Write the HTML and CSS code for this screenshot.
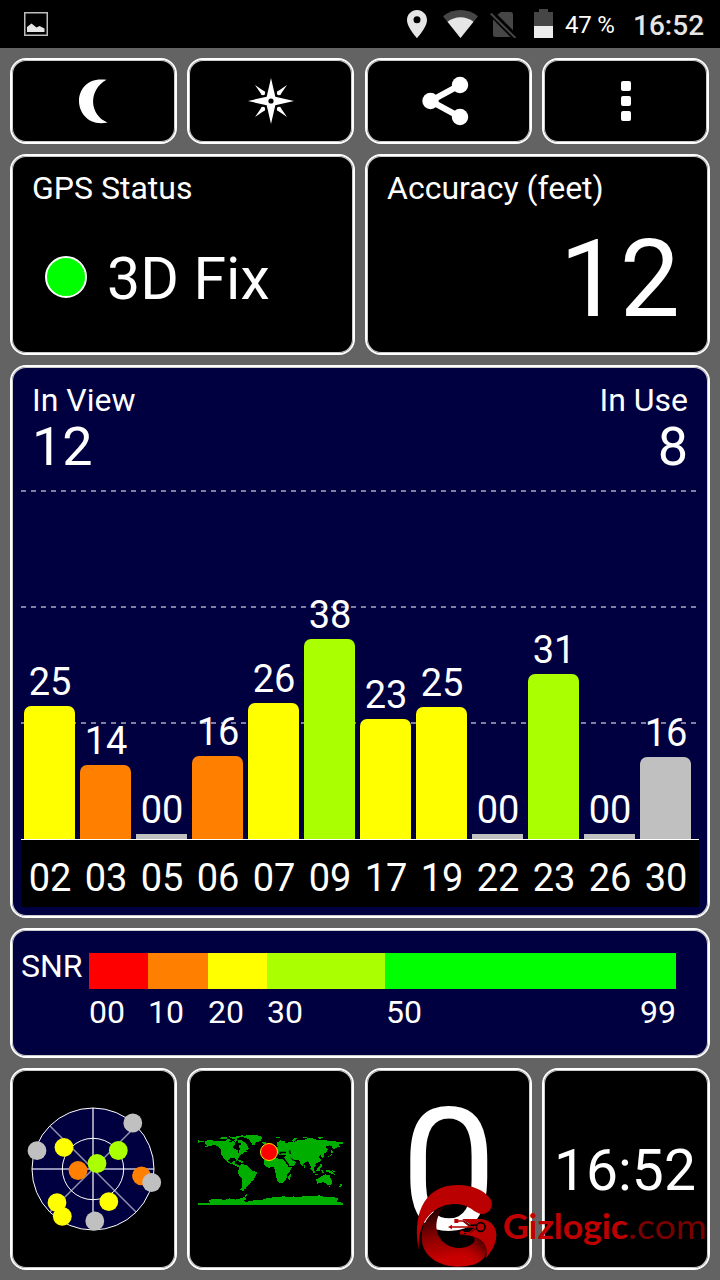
FILE: index.html
```html
<!DOCTYPE html>
<html lang="en">
<head>
    <meta charset="UTF-8">
    <meta name="viewport" content="width=device-width, initial-scale=1.0">
    <title>GPS Test</title>
    <link rel="stylesheet" href="styles.css">
</head>
<body>
    <!-- Status bar -->
    <header class="status-bar">
        <svg class="icon-picture" width="24" height="24" viewBox="0 0 24 24">
            <rect x="0.75" y="0.75" width="22.5" height="22.5" fill="none" stroke="#bdbdbd" stroke-width="1.5"/>
            <path d="M3 20V15L7.500 11.500L12.500 15.500L15.500 14L20.500 16.500V20Z" fill="#e6e6e6"/>
        </svg>
        <div class="status-icons">
            <svg width="20" height="28" viewBox="0 0 20 28">
                <path fill-rule="evenodd" d="M10 0C4.500 0 0 4.400 0 9.900C0 17.300 10 28 10 28S20 17.300 20 9.900C20 4.400 15.500 0 10 0ZM10 13.300A3.500 3.500 0 1 1 10 6.300A3.500 3.500 0 0 1 10 13.300Z" fill="#e6e6e6"/>
            </svg>
            <svg class="icon-wifi" width="35" height="28" viewBox="0 0 35 28">
                <path d="M17.500 28L0 6.200C10-2 25-2 35 6.200Z" fill="#464646"/>
                <path d="M17.500 28L4.500 11.800C12 5.700 23 5.700 30.500 11.800Z" fill="#e6e6e6"/>
            </svg>
            <svg class="icon-sim" width="27" height="28" viewBox="0 0 27 28">
                <path d="M11 2H20.500Q23 2 23 4.500V20.300L7.500 4.800ZM3 9.300L20.500 27H5.500Q3 27 3 24.500Z" fill="#464646"/>
                <path d="M0.800 3.500L25.500 28" stroke="#464646" stroke-width="2"/>
            </svg>
            <svg class="icon-battery" width="19" height="29" viewBox="0 0 19 29">
                <path d="M0 3H5V0H14V3H19V17H0Z" fill="#464646"/>
                <path d="M0 17H19V29H0Z" fill="#ececec"/>
            </svg>
            <span class="battery-level">47 %</span>
            <span class="status-time">16:52</span>
        </div>
    </header>

    <main class="screen">
        <!-- Buttons -->
        <div class="button-row">
            <button class="panel tool">
                <svg width="60" height="60" viewBox="0 0 60 60">
                    <path d="M42.500 8.800C24 6 15 18 15 30S25 55.500 43.500 51.500C25 44 24 19 42.500 8.800Z" fill="#fff"/>
                </svg>
            </button>
            <button class="panel tool">
                <svg width="60" height="60" viewBox="0 0 60 60">
                    <g fill="#fff">
                        <path d="M30 7L34.300 25.700L53 30L34.300 34.300L30 53L25.700 34.300L7 30L25.700 25.700Z"/>
                        <path d="M14 14L23.500 20.500L20.500 23.500ZM46 14L36.500 20.500L39.500 23.500ZM14 46L23.500 39.500L20.500 36.500ZM46 46L36.500 39.500L39.500 36.500Z"/>
                        <circle cx="22" cy="22" r="2.200"/>
                        <circle cx="38" cy="22" r="2.200"/>
                        <circle cx="22" cy="38" r="2.200"/>
                        <circle cx="38" cy="38" r="2.200"/>
                    </g>
                    <circle cx="30" cy="30" r="2.600" fill="#000"/>
                </svg>
            </button>
            <button class="panel tool">
                <svg width="60" height="60" viewBox="0 0 60 60">
                    <path d="M42 14L12.500 30L42 46" fill="none" stroke="#fff" stroke-width="6"/>
                    <circle cx="42" cy="14" r="8.200" fill="#fff"/>
                    <circle cx="12.500" cy="30" r="8.200" fill="#fff"/>
                    <circle cx="42" cy="46" r="8.200" fill="#fff"/>
                </svg>
            </button>
            <button class="panel tool">
                <svg width="60" height="60" viewBox="0 0 60 60" fill="#fff">
                    <rect x="25" y="10" width="10" height="10" rx="2"/>
                    <rect x="25" y="25" width="10" height="10" rx="2"/>
                    <rect x="25" y="40" width="10" height="10" rx="2"/>
                </svg>
            </button>
        </div>

        <!-- Fix and accuracy -->
        <div class="info-row">
            <section class="panel info">
                <h2 class="label">GPS Status</h2>
                <div class="fix">
                    <span class="fix-light"></span>
                    <span>3D Fix</span>
                </div>
            </section>
            <section class="panel info">
                <h2 class="label">Accuracy (feet)</h2>
                <div class="accuracy">12</div>
            </section>
        </div>

        <!-- Satellites -->
        <section class="panel satellites">
            <div class="counts">
                <div>
                    <h2 class="label">In View</h2>
                    <div class="count">12</div>
                </div>
                <div class="in-use">
                    <h2 class="label">In Use</h2>
                    <div class="count">8</div>
                </div>
            </div>
            <div class="plot">
                <div class="sat"><span>25</span><div class="bar yellow" style="height: 133px"></div></div>
                <div class="sat"><span>14</span><div class="bar orange" style="height: 74px"></div></div>
                <div class="sat"><span>00</span><div class="bar grey flat" style="height: 5px"></div></div>
                <div class="sat"><span>16</span><div class="bar orange" style="height: 83px"></div></div>
                <div class="sat"><span>26</span><div class="bar yellow" style="height: 136px"></div></div>
                <div class="sat"><span>38</span><div class="bar lime" style="height: 200px"></div></div>
                <div class="sat"><span>23</span><div class="bar yellow" style="height: 120px"></div></div>
                <div class="sat"><span>25</span><div class="bar yellow" style="height: 132px"></div></div>
                <div class="sat"><span>00</span><div class="bar grey flat" style="height: 5px"></div></div>
                <div class="sat"><span>31</span><div class="bar lime" style="height: 165px"></div></div>
                <div class="sat"><span>00</span><div class="bar grey flat" style="height: 5px"></div></div>
                <div class="sat"><span>16</span><div class="bar grey" style="height: 82px"></div></div>
            </div>
            <div class="sat-ids">
                <span>02</span><span>03</span><span>05</span><span>06</span><span>07</span><span>09</span>
                <span>17</span><span>19</span><span>22</span><span>23</span><span>26</span><span>30</span>
            </div>
        </section>

        <!-- SNR scale -->
        <section class="panel snr">
            <span class="snr-title">SNR</span>
            <div class="scale">
                <div class="red"></div>
                <div class="orange"></div>
                <div class="yellow"></div>
                <div class="lime"></div>
                <div class="green"></div>
                <span>00</span>
                <span>10</span>
                <span>20</span>
                <span>30</span>
                <span class="scale-end"><span>50</span><span>99</span></span>
            </div>
        </section>

        <!-- Bottom tiles -->
        <div class="tile-row">
            <section class="panel tile">
                <svg width="141" height="130" viewBox="0 0 141 130">
                    <circle cx="70" cy="65" r="61" fill="#000040"/>
                    <path d="M27 22L113 108M27 108L113 22" stroke="#9090b0" stroke-width="1.500"/>
                    <path d="M9 65H131" stroke="#8f8fb5" stroke-width="2"/>
                    <path d="M70 4V126" stroke="#fff" stroke-width="1.200"/>
                    <circle cx="70" cy="65" r="61" fill="none" stroke="#fff"/>
                    <circle cx="70" cy="65" r="30.700" fill="none" stroke="#fff"/>
                    <g fill="#c0c0c0">
                        <circle cx="109.800" cy="19" r="9.400"/>
                        <circle cx="14" cy="46.700" r="9.400"/>
                        <circle cx="71.800" cy="117" r="9.400"/>
                    </g>
                    <g fill="#ffff00">
                        <circle cx="41" cy="43.300" r="9.400"/>
                        <circle cx="34" cy="98.700" r="9.400"/>
                        <circle cx="39.300" cy="112.300" r="9.400"/>
                        <circle cx="85.800" cy="97.700" r="9.400"/>
                    </g>
                    <g fill="#ff8000">
                        <circle cx="55" cy="66.500" r="9.400"/>
                        <circle cx="118.500" cy="71.800" r="9.400"/>
                    </g>
                    <circle cx="74" cy="59.500" r="9.400" fill="#aaff00"/>
                    <circle cx="95.300" cy="46.500" r="9.400" fill="#aaff00"/>
                    <circle cx="128.700" cy="78.500" r="9.400" fill="#c0c0c0"/>
                </svg>
            </section>
            <section class="panel tile">
                <svg class="map" width="145" height="70" viewBox="0 0 435 210">
                    <g fill="#00ae00" shape-rendering="crispEdges">
                        <!-- the Americas -->
                        <path d="M20 18L34 15L60 19L84 17L98 21L108 18L112 28L104 34L108 42L118 45L122 54L126 42L122 32L134 27L142 31L153 42L144 45L148 50L139 51L132 57L124 63L118 75L115 78L111 69L97 70L91 77L97 84L104 82L106 77L112 78L109 85L119 89L125 94L124 98L112 92L100 87L89 82L82 75L75 67L70 58L69 44L58 32L46 30L33 34L17 37L29 30L20 27Z"/>
                        <path d="M0 15L10 19L18 17L17 22L4 21L0 24ZM66 9L78 5L88 8L84 13L69 13ZM80 15L94 12L101 17L91 19ZM92 4L108 7L120 2L137 1L123 7L114 12L98 10ZM106 14L117 13L119 19L111 20ZM121 14L132 16L146 28L151 36L143 37L134 28L120 22ZM118 74L131 77L139 81L134 84L119 78Z"/>
                        <path d="M125 5L151 0L190 2L191 11L188 18L174 22L168 31L162 28L155 15L145 9ZM192 20L203 20L205 25L195 28Z"/>
                        <path d="M124 93L132 87L146 91L157 100L161 106L177 111L175 119L170 125L169 135L160 139L153 150L146 154L144 160L137 164L137 168L126 165L131 158L131 138L132 130L125 123L119 110L123 103Z"/>
                        <!-- Africa -->
                        <path d="M198 76L205 65L218 64L237 70L257 74L267 89L272 96L283 95L276 108L268 117L265 132L259 140L253 144L242 143L236 132L234 118L230 104L226 96L212 98L203 94L198 87ZM272 122L280 115L278 126L275 134L270 132Z"/>
                        <!-- Europe and Asia -->
                        <path d="M201 63L201 53L215 48L228 40L240 36L235 31L237 23L248 16L262 20L261 26L271 22L289 21L300 15L317 15L333 8L348 11L359 16L381 14L393 19L411 18L421 22L435 21V27L421 29L426 34L412 39L408 46L402 35L394 31L380 36L391 42L384 52L376 56L379 64L373 68L367 60L362 66L370 76L365 81L351 87L354 93L347 96L348 107L342 104L337 91L330 78L318 84L315 93L308 89L304 75L287 74L294 82L290 91L276 94L266 82L258 67L264 60L243 59L237 53L226 53L217 62Z"/>
                        <path d="M232 6L249 5L246 10L235 9ZM281 17L289 9L298 10L287 20ZM313 7L325 5L328 9L316 10ZM361 7L373 7L376 10L362 11ZM210 37L216 36L219 45L209 48ZM399 45L407 51L404 55L399 52ZM403 56L401 61L390 66L384 67L396 61ZM366 86L372 89L370 98L366 93ZM319 91L322 94L320 98L317 96Z"/>
                        <!-- Oceania -->
                        <path d="M335 97L341 99L352 112L347 114ZM356 101L365 94L368 97L364 108L355 107ZM350 117L363 119L361 121L350 119ZM370 104L380 104L374 107L379 114L371 113ZM383 103L399 107L410 119L397 115L384 109ZM402 106L411 109L407 111ZM354 133L367 128L373 122L381 118L390 121L393 117L398 129L402 137L400 149L390 151L382 143L373 142L358 146ZM391 154L397 153L396 158ZM428 146L433 151L427 155L420 160L426 151Z"/>
                        <!-- Antarctica -->
                        <path d="M0 204L38 204L31 198L43 192L64 193L81 194L95 190L113 194L131 189L140 185L145 177L148 181L141 187L145 193L137 198L144 201L168 196L180 194L191 195L210 188L235 187L257 184L273 187L286 184L304 187L316 183L343 184L365 181L382 187L405 186L421 190L416 200L435 204V210H0Z"/>
                    </g>
                    <path d="M244 50H264V55H250V58H244ZM272 47L279 46L277 51L280 57L275 57ZM257 73L261 72L275 91L271 91ZM275 65L289 76L285 77Z" fill="#000"/>
                    <circle cx="213" cy="51" r="25.500" fill="#ff0000" stroke="#ffe600" stroke-width="3"/>
                </svg>
            </section>
            <section class="panel tile speed">0</section>
            <section class="panel tile clock">16:52</section>
        </div>
    </main>

    <!-- Watermark -->
    <svg class="watermark" width="320" height="110" viewBox="0 0 960 330">
        <defs>
            <linearGradient id="bowl" x1="0.35" y1="0" x2="0.5" y2="1">
                <stop offset="0" stop-color="#180000"/>
                <stop offset="0.5" stop-color="#8c0000"/>
                <stop offset="0.85" stop-color="#c80000"/>
            </linearGradient>
            <linearGradient id="tip" x1="0" y1="1" x2="1" y2="0">
                <stop offset="0.25" stop-color="#c80000" stop-opacity="0"/>
                <stop offset="1" stop-color="#000"/>
            </linearGradient>
        </defs>
        <path d="M57 240C37 150 63 45 172 45C218 45 252 61 270 85C284 108 268 133 246 132C222 130 210 103 168 102C112 99 50 145 57 240Z" fill="#ba0000"/>
        <path d="M139 107C92 119 65 158 65 204C65 254 112 290 174 290C225 290 257 273 259 244C260 223 245 201 210 194C233 202 228 221 201 230C162 243 117 222 110 180C106 151 116 125 139 107Z" fill="url(#bowl)"/>
        <path d="M172 290C225 290 257 273 259 244C260 223 245 201 210 194C233 202 228 221 201 230Z" fill="url(#tip)"/>
        <path d="M186 147H239C268 147 289 167 289 194C289 223 273 247 258 263C268 222 243 197 190 195L226 176L208 161Z" fill="#ba0000"/>
        <g fill="none" stroke="#000" stroke-width="5">
            <path d="M190 153L209 166H229M207 188L226 176"/>
            <circle cx="242" cy="171" r="13"/>
        </g>
        <g fill="none" stroke="#b00000" stroke-width="4">
            <path d="M172 153H190L209 170H229M188 188H207L226 174M153 171H229"/>
        </g>
        <path d="M144 171L156 164V178ZM163 147H175V159H163Z" fill="#ba0000"/>
        <circle cx="186" cy="188" r="6.500" fill="#ba0000"/>
        <text class="brand" x="308" y="207" textLength="376" lengthAdjust="spacingAndGlyphs">Gizlogic</text>
        <text class="domain" x="684" y="207" textLength="236" lengthAdjust="spacingAndGlyphs">.com</text>
    </svg>
</body>
</html>
```
FILE: styles.css
```css
* {
    box-sizing: border-box;
}

body {
    margin: 0;
    width: 720px;
    height: 1280px;
    position: relative;
    overflow: hidden;
    background: #636363;
    color: white;
    font-family: Roboto, sans-serif;
}

svg {
    display: block;
    flex: none;
}

/* Status bar */
.status-bar {
    display: flex;
    justify-content: space-between;
    align-items: center;
    height: 48px;
    padding: 0 16px 0 24px;
    background: #000;
}

.status-icons {
    display: flex;
    align-items: center;
    height: 48px;
}

.icon-wifi {
    margin-left: 16px;
}

.icon-sim {
    margin-left: 12px;
}

.icon-battery {
    margin-left: 17px;
    margin-bottom: 1px;
}

.battery-level {
    width: 68px;
    margin-left: 12px;
    font-size: 24px;
    letter-spacing: -0.2px;
    padding-top: 1px;
}

.status-time {
    width: 71px;
    font-size: 28px;
    font-weight: 500;
    color: #e6e6e6;
    margin-top: 2px;
}

/* Panels */
.screen {
    display: flex;
    flex-direction: column;
    gap: 10px;
    padding: 10px;
}

.panel {
    border: 2px solid white;
    border-radius: 16px;
    box-shadow: inset 0 0 0 1px #ccc;
    background: #000;
    color: white;
    font-family: inherit;
}

.label {
    margin: 0;
    font-size: 32px;
    font-weight: 400;
    line-height: 38px;
}

/* Buttons */
.button-row {
    display: grid;
    grid-template-columns: repeat(4, 167px);
    column-gap: 10.4px;
    height: 86px;
}

.tool {
    display: flex;
    align-items: center;
    justify-content: center;
    padding: 0;
}

/* Fix and accuracy */
.info-row {
    display: grid;
    grid-template-columns: 1fr 1fr;
    gap: 10px;
    height: 201px;
}

.info {
    padding: 13px 20px;
}

.fix {
    display: flex;
    align-items: center;
    gap: 20px;
    margin: 37px 0 0 13px;
    font-size: 59px;
    line-height: 70px;
}

.fix-light {
    width: 42px;
    height: 42px;
    margin-bottom: 4px;
    border: 2px solid white;
    border-radius: 50%;
    background: #00ff00;
}

.accuracy {
    margin-top: 13px;
    padding-right: 8px;
    font-size: 107px;
    line-height: 120px;
    text-align: right;
}

/* Satellites */
.satellites {
    height: 553px;
    padding: 14px 9px 0;
    background: #000040;
}

.counts {
    display: flex;
    justify-content: space-between;
    height: 109px;
    padding: 0 11px;
}

.count {
    font-size: 54px;
    line-height: 55px;
}

.in-use {
    text-align: right;
}

.plot {
    display: flex;
    align-items: flex-end;
    gap: 5px;
    height: 350px;
    padding-left: 3px;
    border-bottom: 1px solid white;
    background-image:
        linear-gradient(90deg, #7f7f9f 5px, transparent 5px),
        linear-gradient(90deg, #7f7f9f 5px, transparent 5px),
        linear-gradient(90deg, #7f7f9f 5px, transparent 5px);
    background-size: 10px 2px;
    background-position: 0 0, 0 116px, 0 232px;
    background-repeat: repeat-x;
}

.sat {
    width: 51px;
    font-size: 38px;
    line-height: 44px;
    text-align: center;
}

.sat span {
    display: block;
    margin-bottom: 2px;
    padding-left: 1px;
}

.bar {
    border-radius: 7px 7px 0 0;
}

.flat {
    border-radius: 0;
}

.sat-ids {
    display: flex;
    gap: 5px;
    height: 67px;
    padding-left: 3px;
    background: #000;
    font-size: 38px;
    line-height: 76px;
}

.sat-ids span {
    width: 51px;
    padding-left: 1px;
    text-align: center;
}

.red { background: #ff0000; }
.orange { background: #ff8000; }
.yellow { background: #ffff00; }
.lime { background: #aaff00; }
.green { background: #00ff00; }
.grey { background: #c0c0c0; }

/* SNR scale */
.snr {
    display: flex;
    height: 130px;
    padding: 23px 0 0 9px;
    background: #000040;
    font-size: 32px;
}

.snr-title {
    width: 68px;
    line-height: 26px;
}

.scale {
    display: grid;
    grid-template-columns: 59px 60px 59px 118px 291px;
    grid-template-rows: 36px 46px;
    line-height: 46px;
}

.scale-end {
    display: flex;
    justify-content: space-between;
    padding-left: 1px;
}

/* Bottom tiles */
.tile-row {
    display: grid;
    grid-template-columns: 167px 167px 167px 167.6px;
    column-gap: 10.4px;
    height: 202px;
}

.tile {
    display: flex;
    align-items: center;
    justify-content: center;
}

.map {
    margin-top: 2px;
}

.speed {
    padding: 4px 0 0 1px;
    font-size: 171px;
    line-height: 194px;
}

.clock {
    padding: 2px 2px 0 0;
    font-size: 57px;
}

/* Watermark */
.watermark {
    position: absolute;
    left: 400px;
    top: 1170px;
}

.brand {
    font: 700 102px Lato, sans-serif;
    fill: #c00000;
}

.domain {
    font: 400 102px Lato, sans-serif;
    fill: #780000;
}
```
